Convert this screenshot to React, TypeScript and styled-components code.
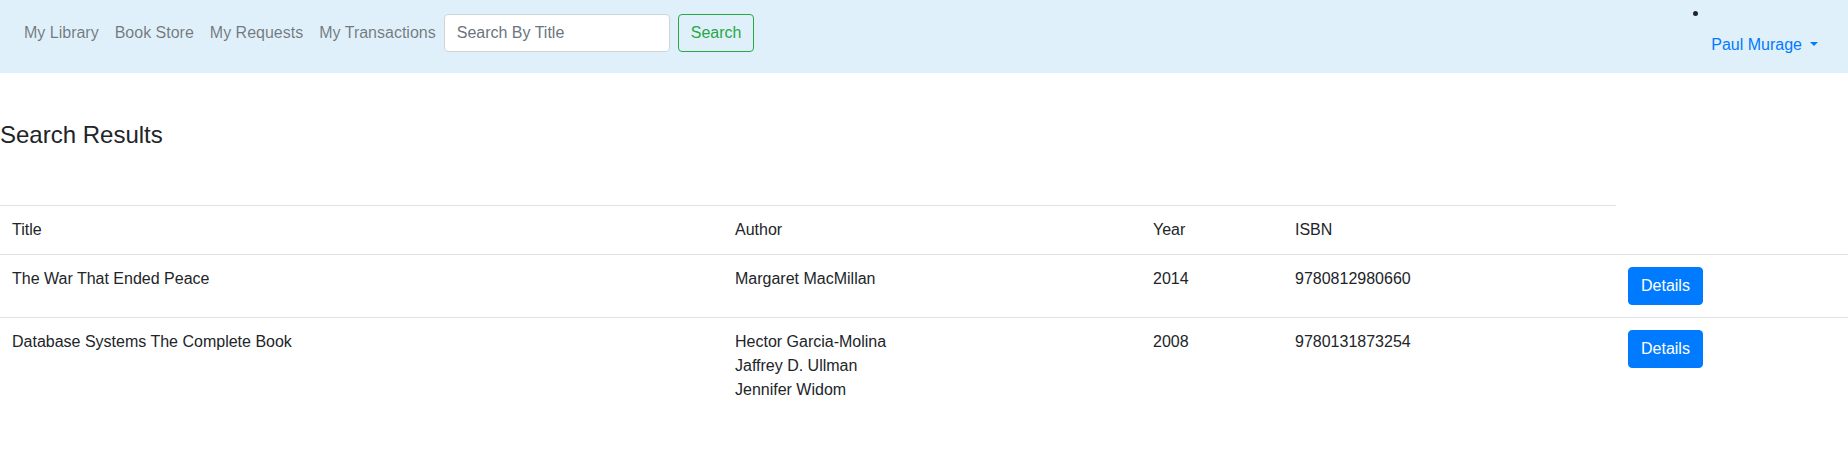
import React from 'react';
import styled, { createGlobalStyle } from 'styled-components';

interface Book {
  title: string;
  authors: string[];
  year: number;
  isbn: string;
}

const books: Book[] = [
  {
    title: 'The War That Ended Peace',
    authors: ['Margaret MacMillan'],
    year: 2014,
    isbn: '9780812980660',
  },
  {
    title: 'Database Systems The Complete Book',
    authors: ['Hector Garcia-Molina', 'Jaffrey D. Ullman', 'Jennifer Widom'],
    year: 2008,
    isbn: '9780131873254',
  },
];

const columns = [723, 418, 142, 333, 232];

const App = (): JSX.Element => {
  return (
    <>
      <GlobalStyle />
      <Navbar>
        <LeftNav>
          <NavLink href="#">My Library</NavLink>
          <NavLink href="#">Book Store</NavLink>
          <NavLink href="#">My Requests</NavLink>
          <NavLink href="#">My Transactions</NavLink>
          <SearchForm onSubmit={(e) => e.preventDefault()}>
            <SearchInput type="text" placeholder="Search By Title" />
            <SearchButton type="submit">Search</SearchButton>
          </SearchForm>
        </LeftNav>
        <RightNav>
          <Marker />
          <DropdownToggle href="#">
            Paul Murage
            <Caret />
          </DropdownToggle>
        </RightNav>
      </Navbar>
      <Main>
        <Heading>Search Results</Heading>
        <Table>
          <colgroup>
            {columns.map((w, i) => (
              <Col key={i} $width={w} />
            ))}
          </colgroup>
          <tbody>
            <tr>
              <HeadCell>Title</HeadCell>
              <HeadCell>Author</HeadCell>
              <HeadCell>Year</HeadCell>
              <HeadCell>ISBN</HeadCell>
            </tr>
            {books.map((book) => (
              <tr key={book.isbn}>
                <Cell>{book.title}</Cell>
                <Cell>
                  {book.authors.map((author) => (
                    <Author key={author}>{author}</Author>
                  ))}
                </Cell>
                <Cell>{book.year}</Cell>
                <Cell>{book.isbn}</Cell>
                <Cell>
                  <DetailsButton type="button">Details</DetailsButton>
                </Cell>
              </tr>
            ))}
          </tbody>
        </Table>
      </Main>
    </>
  );
};

const GlobalStyle = createGlobalStyle`
  body {
    margin: 0;
    font-family: "Liberation Sans", Arial, sans-serif;
    font-size: 16px;
    line-height: 1.5;
    color: #212529;
    background: #fff;
  }
`;

const Navbar = styled.nav`
  display: flex;
  justify-content: space-between;
  align-items: flex-start;
  box-sizing: border-box;
  height: 73px;
  padding: 0 22px 0 16px;
  background: #e0f0fa;
`;

const LeftNav = styled.div`
  display: flex;
  align-items: flex-end;
  margin-top: 12px;
`;

const NavLink = styled.a`
  padding: 9px 8px 7px;
  line-height: 24px;
  color: rgba(0, 0, 0, 0.5);
  text-decoration: none;
`;

const SearchForm = styled.form`
  display: flex;
  align-items: center;
  margin: 0;
`;

const SearchInput = styled.input`
  box-sizing: border-box;
  width: 226px;
  height: 38px;
  margin: 0 8px 0 0;
  padding: 6px 12px;
  font-family: inherit;
  font-size: 16px;
  color: #495057;
  background: #fff;
  border: 1px solid #ced4da;
  border-radius: 4px;

  &::placeholder {
    color: #6c757d;
  }
`;

const SearchButton = styled.button`
  box-sizing: border-box;
  height: 38px;
  padding: 6px 12px;
  font-family: inherit;
  font-size: 16px;
  line-height: 24px;
  color: #28a745;
  background: transparent;
  border: 1px solid #28a745;
  border-radius: 4px;
`;

const RightNav = styled.div`
  display: flex;
  flex-direction: column;
  align-items: flex-start;
`;

const Marker = styled.span`
  width: 5px;
  height: 5px;
  margin: 11px 0 0 -10px;
  border-radius: 50%;
  background: #212529;
`;

const DropdownToggle = styled.a`
  margin-top: 9px;
  padding: 8px;
  line-height: 24px;
  color: #007bff;
  text-decoration: none;
`;

const Caret = styled.span`
  display: inline-block;
  margin-left: 8px;
  vertical-align: 0.255em;
  border-top: 4.8px solid;
  border-right: 4.8px solid transparent;
  border-left: 4.8px solid transparent;
`;

const Main = styled.main`
  display: block;
`;

const Heading = styled.h4`
  margin: 47px 0 56px;
  font-size: 24px;
  font-weight: 400;
  line-height: 29px;
`;

const Table = styled.table`
  width: 100%;
  table-layout: fixed;
  border-collapse: collapse;
`;

const Col = styled.col<{ $width: number }>`
  width: ${({ $width }) => `${$width}px`};
`;

const HeadCell = styled.th`
  padding: 12px;
  text-align: left;
  font-weight: 400;
  vertical-align: top;
  border-top: 1px solid #dee2e6;
`;

const Cell = styled.td`
  padding: 12px;
  vertical-align: top;
  border-top: 1px solid #dee2e6;
`;

const Author = styled.div`
  line-height: 24px;
`;

const DetailsButton = styled.button`
  box-sizing: border-box;
  height: 38px;
  padding: 6px 12px;
  font-family: inherit;
  font-size: 16px;
  line-height: 24px;
  color: #fff;
  background: #007bff;
  border: 1px solid #007bff;
  border-radius: 4px;
`;

export default App;
